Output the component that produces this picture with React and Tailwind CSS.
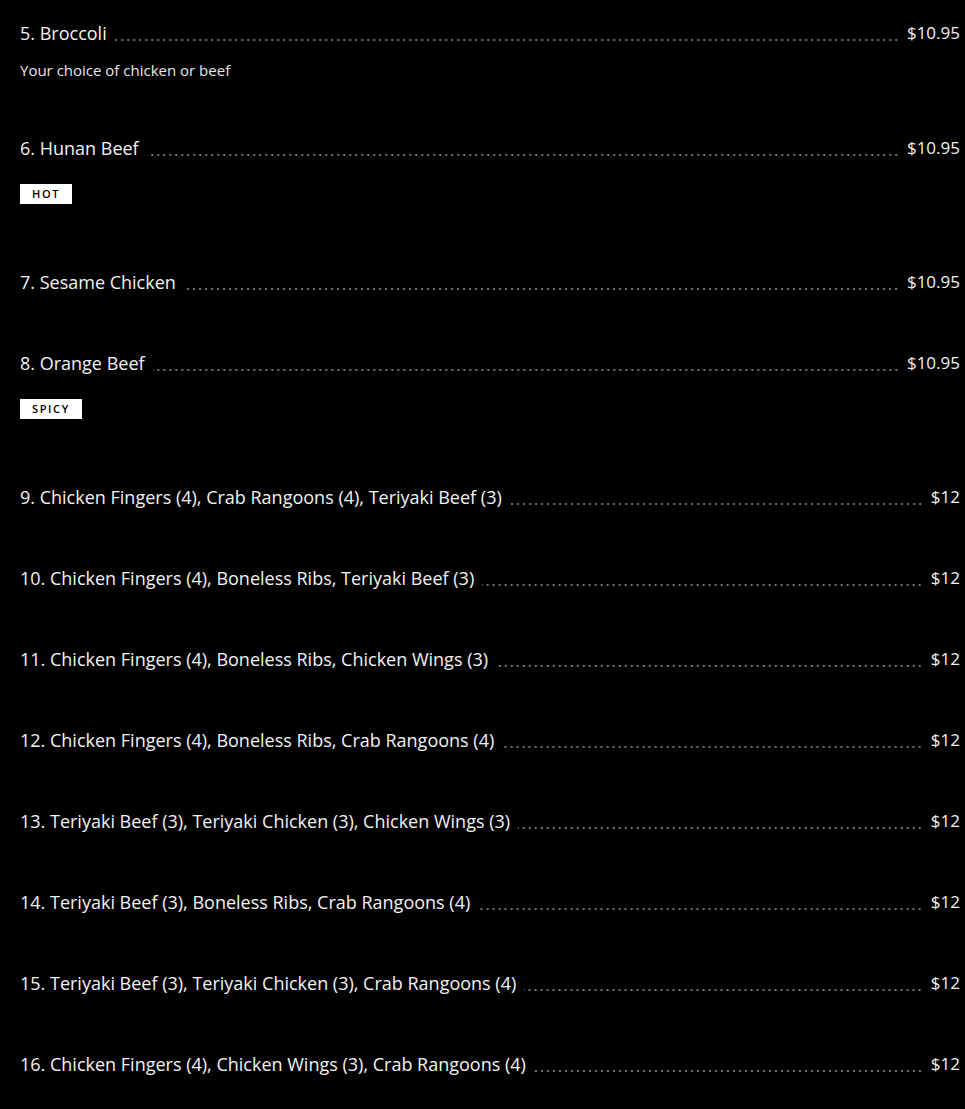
import React from "react";

const items = [
  { name: "5. Broccoli", price: "$10.95", desc: "Your choice of chicken or beef" },
  { name: "6. Hunan Beef", price: "$10.95", badge: "HOT" },
  { name: "7. Sesame Chicken", price: "$10.95" },
  { name: "8. Orange Beef", price: "$10.95", badge: "SPICY" },
  { name: "9. Chicken Fingers (4), Crab Rangoons (4), Teriyaki Beef (3)", price: "$12" },
  { name: "10. Chicken Fingers (4), Boneless Ribs, Teriyaki Beef (3)", price: "$12" },
  { name: "11. Chicken Fingers (4), Boneless Ribs, Chicken Wings (3)", price: "$12" },
  { name: "12. Chicken Fingers (4), Boneless Ribs, Crab Rangoons (4)", price: "$12" },
  { name: "13. Teriyaki Beef (3), Teriyaki Chicken (3), Chicken Wings (3)", price: "$12" },
  { name: "14. Teriyaki Beef (3), Boneless Ribs, Crab Rangoons (4)", price: "$12" },
  { name: "15. Teriyaki Beef (3), Teriyaki Chicken (3), Crab Rangoons (4)", price: "$12" },
  { name: "16. Chicken Fingers (4), Chicken Wings (3), Crab Rangoons (4)", price: "$12" },
];

function Item({ item }) {
  return (
    <div className="pb-[55px]">
      <div className="flex items-start h-[26px]">
        <span className="text-[18px] leading-[26px] text-[#f2f2f2] whitespace-nowrap">{item.name}</span>
        <span className="flex-1 mx-2 mt-[18px] h-[4px] bg-[radial-gradient(circle,#9a9a9a_0.6px,transparent_1px)] bg-[length:6px_4px] bg-repeat-x bg-[position:right_center]" />
        <span className="text-[17px] leading-[26px] text-[#f2f2f2] whitespace-nowrap">{item.price}</span>
      </div>
      {item.desc && (
        <div className="pt-[14px] text-[15px] leading-[20px] text-[#e6e6e6]">{item.desc}</div>
      )}
      {item.badge && (
        <div className="pt-[23px] pb-[10px] flex">
          <span className="bg-white text-black h-[20px] px-[12px] flex items-center text-[11px] tracking-[0.15em] font-semibold">
            {item.badge}
          </span>
        </div>
      )}
    </div>
  );
}

export default function App() {
  return (
    <div className="min-h-[1109px] bg-black pt-[20px] pl-[20px] pr-[5px]" style={{ fontFamily: "'Open Sans', sans-serif" }}>
      {items.map((it) => (
        <Item key={it.name} item={it} />
      ))}
    </div>
  );
}
